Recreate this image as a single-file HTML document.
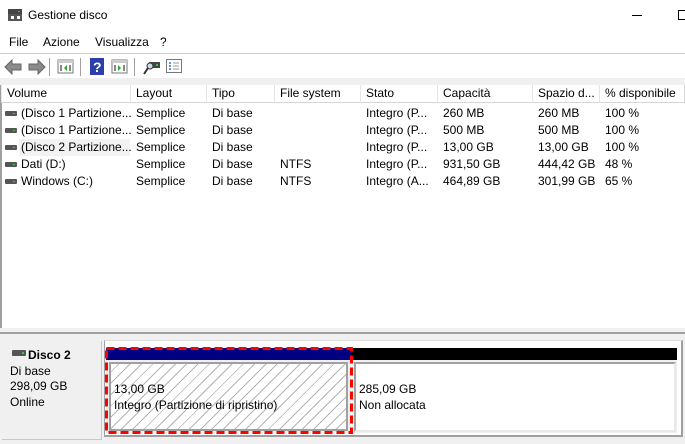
<!DOCTYPE html>
<html><head><meta charset="utf-8"><style>
*{margin:0;padding:0;box-sizing:border-box}
body{width:685px;height:444px;overflow:hidden;background:#fff;font-family:"Liberation Sans",sans-serif;font-size:12px;color:#000;position:relative}
.a{position:absolute;white-space:nowrap}
.hdr{position:absolute;top:85px;height:18px;background:#fff;border-left:1px solid #e5e5e5;border-right:1px solid #d6d6d6;border-bottom:1px solid #d6d6d6;padding-left:5px;line-height:17px}
.row{position:absolute;left:0;width:685px;height:17px;line-height:17px}
.row span{position:absolute}
.di{position:absolute;left:5px;top:6px;width:12px;height:5px;background:#555;border-radius:1px}
.di:after{content:"";position:absolute;right:2px;top:2px;width:2px;height:1px;background:#3c3}
.sep{position:absolute;top:58px;width:1px;height:18px;background:#a0a0a0}
</style></head><body>
<svg class="a" style="left:7px;top:7px" width="16" height="16"><rect x="1" y="2" width="14" height="5" fill="#444"/><rect x="11" y="4" width="2" height="1" fill="#3c3"/><rect x="1" y="7" width="14" height="7" fill="#555"/><rect x="4" y="9" width="3" height="3" fill="#fff"/><rect x="10" y="9" width="3" height="3" fill="#fff"/></svg>
<div class="a" style="left:28px;top:8px;font-size:12px">Gestione disco</div>
<div class="a" style="left:632px;top:15px;width:10px;height:1px;background:#000"></div>
<div class="a" style="left:678px;top:10px;width:10px;height:10px;border:1px solid #000"></div>
<div class="a" style="left:9px;top:35px">File</div>
<div class="a" style="left:43px;top:35px">Azione</div>
<div class="a" style="left:95px;top:35px">Visualizza</div>
<div class="a" style="left:160px;top:35px">?</div>
<div class="a" style="left:0;top:53px;width:685px;height:1px;background:#d0d0d0"></div>
<svg class="a" style="left:3px;top:58px" width="44" height="18"><path d="M2 9 L9 2 V6 H18 V12 H9 V16 Z" fill="#8a8a8a" stroke="#666"/><path d="M42 9 L35 2 V6 H26 V12 H35 V16 Z" fill="#8a8a8a" stroke="#666"/></svg>
<div class="sep" style="left:49px"></div>
<svg class="a" style="left:57px;top:59px" width="18" height="16"><rect x="1" y="1" width="15" height="13" fill="#fff" stroke="#777"/><rect x="1" y="1" width="15" height="3" fill="#ccc"/><path d="M10 6 L7 9 L10 12Z" fill="#2a2"/><rect x="3" y="6" width="2" height="6" fill="#888"/><rect x="12" y="6" width="2" height="6" fill="#888"/></svg>
<div class="sep" style="left:80px"></div>
<svg class="a" style="left:90px;top:58px" width="14" height="17"><rect width="14" height="17" fill="#2c3fa8"/><text x="3" y="14" fill="#fff" font-size="14" font-family="Liberation Sans" font-weight="bold">?</text></svg>
<svg class="a" style="left:111px;top:59px" width="18" height="16"><rect x="1" y="1" width="15" height="13" fill="#fff" stroke="#777"/><rect x="1" y="1" width="15" height="3" fill="#ccc"/><path d="M7 6 L10 9 L7 12Z" fill="#2a2"/><rect x="3" y="6" width="2" height="6" fill="#888"/><rect x="12" y="6" width="2" height="6" fill="#888"/></svg>
<div class="sep" style="left:134px"></div>
<svg class="a" style="left:143px;top:59px" width="18" height="16"><rect x="6" y="3" width="11" height="6" fill="#444"/><rect x="13" y="5" width="2" height="2" fill="#3c3"/><circle cx="7" cy="7" r="3" fill="#cde" stroke="#333"/><path d="M5 9 L1 15" stroke="#333" stroke-width="2"/></svg>
<svg class="a" style="left:166px;top:59px" width="17" height="15"><rect x="0.5" y="0.5" width="15" height="13" fill="#fff" stroke="#777"/><path d="M3 4h2M3 7h2M3 10h2" stroke="#27c" stroke-width="1.5"/><path d="M7 4h6M7 7h6M7 10h6" stroke="#999"/></svg>
<div class="a" style="left:0;top:78px;width:685px;height:7px;background:#f0f0f0"></div>
<div class="a" style="left:0;top:85px;width:2px;height:244px;background:#a0a0a0"></div>
<div class="hdr" style="left:1px;width:130px">Volume</div>
<div class="hdr" style="left:130px;width:77px">Layout</div>
<div class="hdr" style="left:206px;width:69px">Tipo</div>
<div class="hdr" style="left:274px;width:87px">File system</div>
<div class="hdr" style="left:360px;width:78px">Stato</div>
<div class="hdr" style="left:437px;width:96px">Capacità</div>
<div class="hdr" style="left:532px;width:68px">Spazio d...</div>
<div class="hdr" style="left:599px;width:86px">% disponibile</div>

<div class="row" style="top:105px"><i class="di"></i><span style="left:21px">(Disco 1 Partizione...</span><span style="left:136px">Semplice</span><span style="left:212px">Di base</span><span style="left:366px">Integro (P...</span><span style="left:443px">260 MB</span><span style="left:538px">260 MB</span><span style="left:605px">100 %</span></div>
<div class="row" style="top:122px"><i class="di"></i><span style="left:21px">(Disco 1 Partizione...</span><span style="left:136px">Semplice</span><span style="left:212px">Di base</span><span style="left:366px">Integro (P...</span><span style="left:443px">500 MB</span><span style="left:538px">500 MB</span><span style="left:605px">100 %</span></div>
<div class="row" style="top:139px"><i class="di"></i><span style="left:19px;width:111px;height:17px;background:#f2f2f2"></span><span style="left:21px">(Disco 2 Partizione...</span><span style="left:136px">Semplice</span><span style="left:212px">Di base</span><span style="left:366px">Integro (P...</span><span style="left:443px">13,00 GB</span><span style="left:538px">13,00 GB</span><span style="left:605px">100 %</span></div>
<div class="row" style="top:156px"><i class="di"></i><span style="left:21px">Dati (D:)</span><span style="left:136px">Semplice</span><span style="left:212px">Di base</span><span style="left:280px">NTFS</span><span style="left:366px">Integro (P...</span><span style="left:443px">931,50 GB</span><span style="left:538px">444,42 GB</span><span style="left:605px">48 %</span></div>
<div class="row" style="top:173px"><i class="di"></i><span style="left:21px">Windows (C:)</span><span style="left:136px">Semplice</span><span style="left:212px">Di base</span><span style="left:280px">NTFS</span><span style="left:366px">Integro (A...</span><span style="left:443px">464,89 GB</span><span style="left:538px">301,99 GB</span><span style="left:605px">65 %</span></div>

<div class="a" style="left:0;top:328px;width:685px;height:116px;background:#f0f0f0"></div>
<div class="a" style="left:0;top:332px;width:685px;height:2px;background:#a0a0a0"></div>
<div class="a" style="left:2px;top:341px;width:100px;height:99px;background:#f0f0f0;border-right:1px solid #c8c8c8;border-bottom:1px solid #c8c8c8"></div>
<svg class="a" style="left:12px;top:350px" width="14" height="7"><rect width="14" height="6" rx="1" fill="#555"/><rect x="10" y="2" width="2" height="2" fill="#3c3"/></svg>
<div class="a" style="left:28px;top:348px;font-weight:bold">Disco 2</div>
<div class="a" style="left:10px;top:364px">Di base</div>
<div class="a" style="left:10px;top:379px">298,09 GB</div>
<div class="a" style="left:10px;top:395px">Online</div>
<div class="a" style="left:104px;top:340px;width:579px;height:97px;background:#fff;border-left:1px solid #a0a0a0;border-right:2px solid #a0a0a0;border-bottom:2px solid #a0a0a0;border-top:1px solid #e0e0e0"></div>
<div class="a" style="left:106px;top:348px;width:245px;height:12px;background:#000080"></div>
<div class="a" style="left:351px;top:348px;width:326px;height:12px;background:#000"></div>
<div class="a" style="left:106px;top:360px;width:245px;height:73px;background:#f0f0f0"></div>
<div class="a" style="left:109px;top:362px;width:239px;height:69px;border:2px solid #a0a0a0;background:repeating-linear-gradient(135deg,#fff 0 5px,#b4b4b4 5px 6px,#fff 6px 8px)"></div>
<div class="a" style="left:114px;top:382px">13,00 GB</div>
<div class="a" style="left:114px;top:398px">Integro (Partizione di ripristino)</div>
<div class="a" style="left:352px;top:360px;width:325px;height:73px;background:#f0f0f0"></div>
<div class="a" style="left:354px;top:362px;width:322px;height:70px;border:2px solid #a0a0a0;border-right-color:#e8e8e8;border-bottom-color:#e8e8e8;background:#fff"></div>
<div class="a" style="left:359px;top:382px">285,09 GB</div>
<div class="a" style="left:359px;top:398px">Non allocata</div>
<svg class="a" style="left:104px;top:346px" width="250" height="90"><rect x="2.5" y="2.5" width="245" height="84" fill="none" stroke="#f00" stroke-width="3" stroke-dasharray="8 4"/></svg>
</body></html>
